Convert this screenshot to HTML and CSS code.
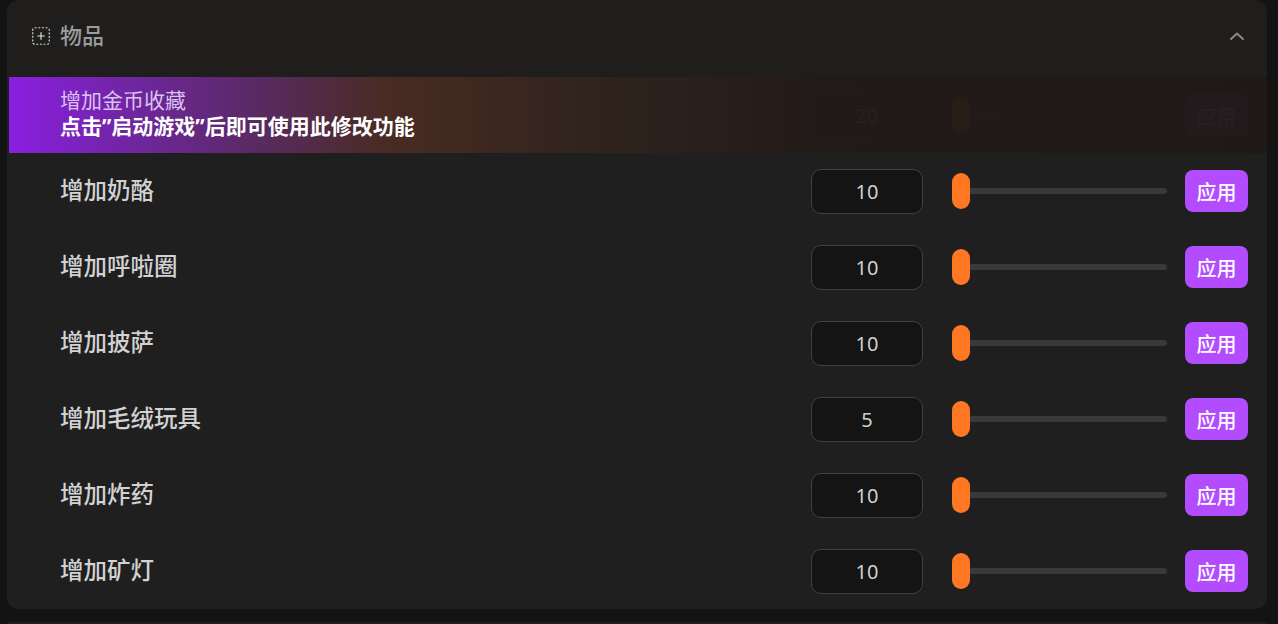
FILE: index.html
```html
<!DOCTYPE html>
<html lang="zh-CN">
<head>
  <meta charset="UTF-8">
  <meta name="viewport" content="width=device-width, initial-scale=1.0">
  <title>物品</title>
  <link rel="stylesheet" href="styles.css">
</head>
<body>

<div class="panel">
  <div class="panel-head">
    <svg class="head-icon" width="18" height="18" viewBox="0 0 18 18">
      <rect x="0.75" y="0.75" width="16.5" height="16.5" rx="2" fill="none" stroke="#d2d2d2" stroke-width="1.2" stroke-dasharray="2 1.6"/>
      <path d="M9 5.2v7.6M5.2 9h7.6" stroke="#e0e0e0" stroke-width="1.2"/>
    </svg>
    <h3>物品</h3>
    <svg class="chevron" width="16" height="10" viewBox="0 0 16 10">
      <path d="M2 8l6-5.5 6 5.5" fill="none" stroke="#8a8a8a" stroke-width="2" stroke-linecap="round" stroke-linejoin="round"/>
    </svg>
  </div>

  <div class="row locked">
    <span class="row-label"></span>
    <div class="num-box">20</div>
    <div class="slider"><span class="thumb"></span></div>
    <button class="apply">应用</button>
    <div class="lock-cover">
      <span class="lock-title">增加金币收藏</span>
      <span class="lock-msg">点击”启动游戏”后即可使用此修改功能</span>
    </div>
  </div>

  <div class="row">
    <span class="row-label">增加奶酪</span>
    <div class="num-box">10</div>
    <div class="slider"><span class="thumb"></span></div>
    <button class="apply">应用</button>
  </div>

  <div class="row">
    <span class="row-label">增加呼啦圈</span>
    <div class="num-box">10</div>
    <div class="slider"><span class="thumb"></span></div>
    <button class="apply">应用</button>
  </div>

  <div class="row">
    <span class="row-label">增加披萨</span>
    <div class="num-box">10</div>
    <div class="slider"><span class="thumb"></span></div>
    <button class="apply">应用</button>
  </div>

  <div class="row">
    <span class="row-label">增加毛绒玩具</span>
    <div class="num-box">5</div>
    <div class="slider"><span class="thumb"></span></div>
    <button class="apply">应用</button>
  </div>

  <div class="row">
    <span class="row-label">增加炸药</span>
    <div class="num-box">10</div>
    <div class="slider"><span class="thumb"></span></div>
    <button class="apply">应用</button>
  </div>

  <div class="row">
    <span class="row-label">增加矿灯</span>
    <div class="num-box">10</div>
    <div class="slider"><span class="thumb"></span></div>
    <button class="apply">应用</button>
  </div>
</div>

<div class="panel next"></div>

</body>
</html>
```

FILE: styles.css
```css
body {
  margin: 0;
  padding: 0 11px 0 7px;
  background: #131313;
  font-family: "Noto Sans", "Noto Sans CJK SC", sans-serif;
  overflow: hidden;
  height: 624px;
}

.panel {
  background: #1f1f1f;
  border-radius: 12px;
  overflow: hidden;
}

.panel.next {
  margin-top: 13px;
  height: 3px;
  border-radius: 12px 12px 0 0;
}

.panel-head {
  display: flex;
  align-items: center;
  height: 71px;
  padding: 0 22px 6px 25px;
  background: #1f1e1d;
}

.head-icon { margin-right: 10px; }

.panel-head h3 {
  margin: 0;
  flex: 1;
  font-size: 22px;
  font-weight: 500;
  color: #9c9c9c;
  margin-top: -3px;
}

.row {
  position: relative;
  display: flex;
  align-items: center;
  height: 76px;
  padding: 0 19px 0 53px;
}

.row-label {
  flex: 1;
  font-size: 23.5px;
  font-weight: 500;
  color: #d2d2d2;
  margin-top: -5px;
}

.num-box {
  width: 110px;
  height: 43px;
  border: 1px solid #404040;
  border-radius: 10px;
  background: #141414;
  color: #d0d0d0;
  font-size: 20px;
  display: flex;
  align-items: center;
  justify-content: center;
}

.slider {
  position: relative;
  width: 215px;
  height: 6px;
  margin: 0 18px 0 29px;
  background: #393939;
  border-radius: 3px;
}

.thumb {
  position: absolute;
  left: 0;
  top: -15px;
  width: 18px;
  height: 36px;
  border-radius: 9px;
  background: #ff7722;
}

.apply {
  width: 63px;
  height: 42px;
  border: none;
  border-radius: 8px;
  background: #b34cff;
  color: #ffffff;
  font-family: inherit;
  font-size: 20px;
  font-weight: 500;
  padding: 0;
}

.lock-cover {
  position: absolute;
  left: 2px;
  top: 0;
  right: 0;
  bottom: 0;
  padding-left: 51px;
  display: flex;
  flex-direction: column;
  justify-content: center;
  background: linear-gradient(90deg,
    rgba(138, 30, 226, 1) 0%,
    rgba(112, 38, 160, 0.99) 10%,
    rgba(90, 42, 98, 0.98) 20%,
    rgba(74, 44, 34, 0.97) 30%,
    rgba(50, 36, 30, 0.97) 45%,
    rgba(34, 26, 24, 0.965) 65%,
    rgba(30, 24, 22, 0.97) 100%);
}

.lock-title {
  font-size: 21px;
  color: #d9c2f2;
  line-height: 26px;
  margin-top: -3px;
}

.lock-msg {
  font-size: 21px;
  font-weight: 700;
  color: #ffffff;
  line-height: 27px;
}
```
